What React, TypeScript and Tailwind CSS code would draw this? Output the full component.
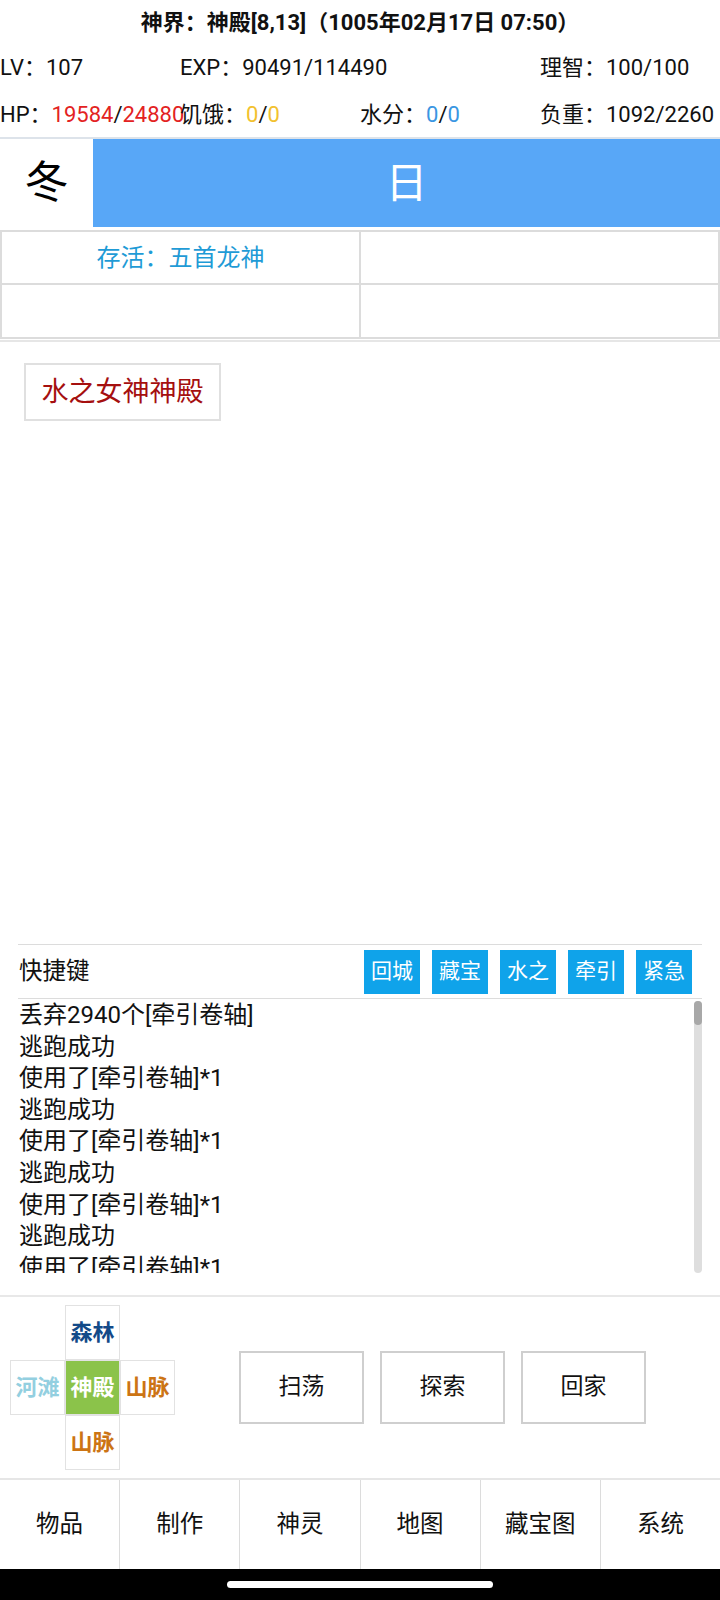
import React from "react";

const font = { fontFamily: 'Roboto, "Noto Sans CJK SC", sans-serif' };

function Stat({ children }: { children: React.ReactNode }) {
  return <div className="w-[180px] whitespace-nowrap">{children}</div>;
}

export default function App() {
  const logs = [
    "丢弃2940个[牵引卷轴]",
    "逃跑成功",
    "使用了[牵引卷轴]*1",
    "逃跑成功",
    "使用了[牵引卷轴]*1",
    "逃跑成功",
    "使用了[牵引卷轴]*1",
    "逃跑成功",
    "使用了[牵引卷轴]*1",
  ];
  const shortcuts = ["回城", "藏宝", "水之", "牵引", "紧急"];
  const actions = ["扫荡", "探索", "回家"];
  const nav = ["物品", "制作", "神灵", "地图", "藏宝图", "系统"];
  return (
    <div className="w-[720px] h-[1600px] bg-white flex flex-col text-[#111]" style={font}>
      <div className="h-[44px] flex items-center justify-center text-[22px] font-bold">
        神界：神殿[8,13]（1005年02月17日 07:50）
      </div>
      <div className="h-[47px] flex items-center text-[22px]">
        <Stat>LV：107</Stat>
        <Stat>EXP：90491/114490</Stat>
        <Stat>{""}</Stat>
        <Stat>理智：100/100</Stat>
      </div>
      <div className="h-[46px] flex items-center text-[22px]">
        <div className="w-[180px] whitespace-nowrap">
          HP：<span className="text-[#e32222]">19584</span>/<span className="text-[#e32222]">24880</span>
        </div>
        <div className="w-[180px] whitespace-nowrap">
          饥饿：<span className="text-[#f2c12e]">0</span>/<span className="text-[#f2c12e]">0</span>
        </div>
        <Stat>
          水分：<span className="text-[#3a96e2]">0</span>/<span className="text-[#3a96e2]">0</span>
        </Stat>
        <Stat>负重：1092/2260</Stat>
      </div>
      <div className="h-[90px] flex border-t-2 border-[#dde3ea]">
        <div className="w-[93px] flex items-center justify-center text-[44px] text-black">冬</div>
        <div className="flex-1 bg-[#58a7f7] flex items-center justify-center text-[42px] text-white">日</div>
      </div>
      <div className="mt-[3px] grid grid-cols-2 gap-[2px] bg-[#dcdcdc] p-[2px]">
        <div className="h-[51px] bg-white flex items-center justify-center text-[24px] text-[#1f9bd6]">
          存活：五首龙神
        </div>
        <div className="h-[51px] bg-white" />
        <div className="h-[52px] bg-white" />
        <div className="h-[52px] bg-white" />
      </div>
      <div className="h-[2px] bg-[#e6e6e6] mt-[1px]" />
      <div className="px-[24px] pt-[21px]">
        <div className="w-[197px] h-[58px] border-2 border-[#e0e0e0] flex items-center justify-center text-[27px] text-[#a50f0f]">
          水之女神神殿
        </div>
      </div>
      <div className="flex-1" />
      <div className="mx-[18px] border-t border-[#dcdcdc] flex items-center h-[54px]">
        <div className="flex-1 pl-[1px] text-[23.5px]">快捷键</div>
        <div className="flex gap-[12px] mr-[10px]">
          {shortcuts.map((s) => (
            <div
              key={s}
              className="w-[56px] h-[44px] bg-[#0fa3ea] text-white text-[21px] flex items-center justify-center"
            >
              {s}
            </div>
          ))}
        </div>
      </div>
      <div className="mx-[18px] border-t border-[#dcdcdc] relative h-[275px] overflow-hidden">
        <div className="pl-[1px] pt-[1px] text-[24px] leading-[31.6px]">
          {logs.map((l, i) => (
            <div key={i}>{l}</div>
          ))}
        </div>
        <div className="absolute right-0 top-[2px] w-[8px] h-[272px] rounded-full bg-[#dedede]">
          <div className="w-[8px] h-[24px] rounded-full bg-[#a8a8a8]" />
        </div>
      </div>
      <div className="h-[22px]" />
      <div className="h-[183px] border-t-2 border-[#e8e8e8] flex items-center">
        <div className="ml-[10px] grid grid-cols-[55px_55px_55px] grid-rows-[55px_55px_55px] text-[22px] font-bold">
          <div />
          <div className="border border-[#e2e2e2] flex items-center justify-center text-[#134a88]">森林</div>
          <div />
          <div className="border border-[#e2e2e2] flex items-center justify-center text-[#93cfe0]">河滩</div>
          <div className="border border-[#e2e2e2] bg-[#8bc34a] flex items-center justify-center text-white">神殿</div>
          <div className="border border-[#e2e2e2] flex items-center justify-center text-[#cc7414]">山脉</div>
          <div />
          <div className="border border-[#e2e2e2] flex items-center justify-center text-[#cc7414]">山脉</div>
          <div />
        </div>
        <div className="ml-[64px] flex gap-[16px]">
          {actions.map((a) => (
            <div
              key={a}
              className="w-[125px] h-[73px] border-2 border-[#cfcfcf] flex items-center justify-center text-[23px]"
            >
              {a}
            </div>
          ))}
        </div>
      </div>
      <div className="h-[91px] border-t-2 border-[#e6e6e6] flex">
        {nav.map((n, i) => (
          <div
            key={n}
            className={
              "flex-1 flex items-center justify-center text-[23.5px] " +
              (i < nav.length - 1 ? "border-r border-[#dcdcdc]" : "")
            }
          >
            {n}
          </div>
        ))}
      </div>
      <div className="h-[31px] bg-black flex items-center justify-center">
        <div className="w-[266px] h-[7px] rounded-full bg-white" />
      </div>
    </div>
  );
}
